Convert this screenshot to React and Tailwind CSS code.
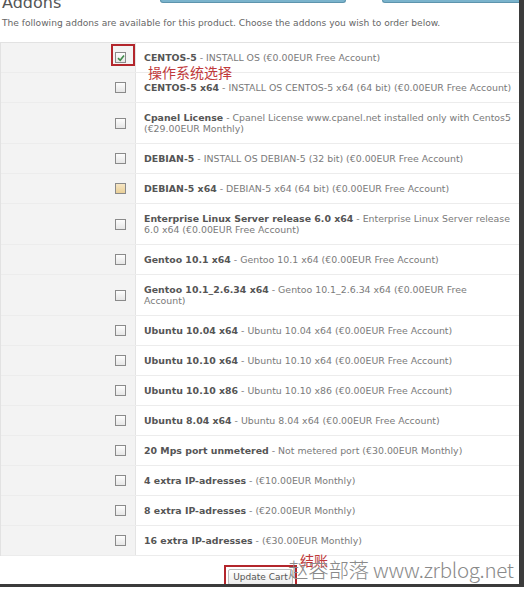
const ADDONS = [
  { name: "CENTOS-5", desc: "INSTALL OS (€0.00EUR Free Account)", checked: true },
  { name: "CENTOS-5 x64", desc: "INSTALL OS CENTOS-5 x64 (64 bit) (€0.00EUR Free Account)" },
  { name: "Cpanel License", desc: "Cpanel License www.cpanel.net installed only with Centos5 (€29.00EUR Monthly)" },
  { name: "DEBIAN-5", desc: "INSTALL OS DEBIAN-5 (32 bit) (€0.00EUR Free Account)" },
  { name: "DEBIAN-5 x64", desc: "DEBIAN-5 x64 (64 bit) (€0.00EUR Free Account)", hover: true },
  { name: "Enterprise Linux Server release 6.0 x64", desc: "Enterprise Linux Server release 6.0 x64 (€0.00EUR Free Account)" },
  { name: "Gentoo 10.1 x64", desc: "Gentoo 10.1 x64 (€0.00EUR Free Account)" },
  { name: "Gentoo 10.1_2.6.34 x64", desc: "Gentoo 10.1_2.6.34 x64 (€0.00EUR Free\nAccount)" },
  { name: "Ubuntu 10.04 x64", desc: "Ubuntu 10.04 x64 (€0.00EUR Free Account)" },
  { name: "Ubuntu 10.10 x64", desc: "Ubuntu 10.10 x64 (€0.00EUR Free Account)" },
  { name: "Ubuntu 10.10 x86", desc: "Ubuntu 10.10 x86 (€0.00EUR Free Account)" },
  { name: "Ubuntu 8.04 x64", desc: "Ubuntu 8.04 x64 (€0.00EUR Free Account)" },
  { name: "20 Mps port unmetered", desc: "Not metered port (€30.00EUR Monthly)" },
  { name: "4 extra IP-adresses", desc: "(€10.00EUR Monthly)" },
  { name: "8 extra IP-adresses", desc: "(€20.00EUR Monthly)" },
  { name: "16 extra IP-adresses", desc: "(€30.00EUR Monthly)" },
];

function Checkbox({ checked, hover }) {
  return (
    <span
      className={`w-[11px] h-[11px] border border-[#8a8a8a] flex items-center justify-center ${
        hover ? "bg-gradient-to-b from-[#f6e6c4] to-[#e9cf97]" : "bg-gradient-to-b from-[#fdfdfd] to-[#e6e6e6]"
      }`}
    >
      {checked && (
        <svg width="8" height="8" viewBox="0 0 8 8">
          <path d="M1 4.2 L3.2 6.3 L7 1.5" fill="none" stroke="#3f8a4a" strokeWidth="1.6" />
        </svg>
      )}
    </span>
  );
}

export default function App() {
  return (
    <div className="w-[524px] h-[589px] bg-white overflow-hidden font-['DejaVu_Sans',sans-serif]">
      <div className="relative h-[587px] border-r-[5px] border-b-[3px] border-[#3b3b3b] overflow-hidden">
        {/* top strip: heading cut off + bottoms of buttons above */}
        <div className="flex items-start h-[10px] overflow-hidden">
          <div className="w-[160px] h-[8px] flex items-end pl-[2px] overflow-hidden">
            <span className="text-[16px] leading-[10px] text-[#555]">Addons</span>
          </div>
          <div className="w-[186px] h-[3px] rounded-b-[3px] border border-t-0 border-[#5d94ad] bg-[#7ab3cc]" />
          <div className="w-[36px]" />
          <div className="flex-1 h-[3px] rounded-bl-[3px] border border-t-0 border-r-0 border-[#5d94ad] bg-[#7ab3cc]" />
        </div>

        <p className="mt-[7px] pl-[2px] text-[9.1px] leading-[12px] text-[#666]">
          The following addons are available for this product. Choose the addons you wish to order below.
        </p>

        {/* addons table */}
        <div className="mt-[13px] border-t border-l border-[#e2e2e2]">
          {ADDONS.map((a) => (
            <div key={a.name} className="grid grid-cols-[135px_1fr] border-b border-[#ececec]">
              <div className="bg-[#f3f3f3] border-r border-[#e4e4e4] flex items-center justify-end pr-[9px]">
                <Checkbox checked={a.checked} hover={a.hover} />
              </div>
              <div className="pl-[8px] pr-[3px] py-[9px] text-[9.4px] leading-[11px] text-[#7a7a7a] whitespace-pre-line">
                <span className="font-bold text-[#555]">{a.name}</span> - {a.desc}
              </div>
            </div>
          ))}
        </div>

        {/* footer */}
        <div className="flex justify-center pt-[9px] pl-[2px]">
          <div className="flex border-2 border-[#b3262c] px-[2px] pt-[2px] pb-[6px]">
            <button className="px-[4px] h-[16px] border border-[#bdbdbd] rounded-[2px] bg-gradient-to-b from-white to-[#ececec] text-[9px] leading-[14px] text-[#555]">
              Update Cart
            </button>
          </div>
        </div>

        {/* annotations */}
        <div className="absolute left-[111px] top-[44px] w-[24px] h-[22px] border-2 border-[#b3262c]" />
        <span className="absolute left-[148px] top-[63px] text-[14px] leading-[18px] text-[#c0393b] font-['Noto_Sans_CJK_SC',sans-serif]">
          操作系统选择
        </span>
        <span className="absolute left-[300px] top-[551px] text-[14px] leading-[18px] text-[#c0393b] font-['Noto_Sans_CJK_SC',sans-serif]">
          结账
        </span>
        <span className="absolute left-[288px] top-[555px] text-[20.5px] leading-[28px] text-[#8a8a8a] font-light font-['Noto_Sans_CJK_SC',sans-serif] tracking-[-0.3px]">
          赵容部落 www.zrblog.net
        </span>
      </div>
    </div>
  );
}
